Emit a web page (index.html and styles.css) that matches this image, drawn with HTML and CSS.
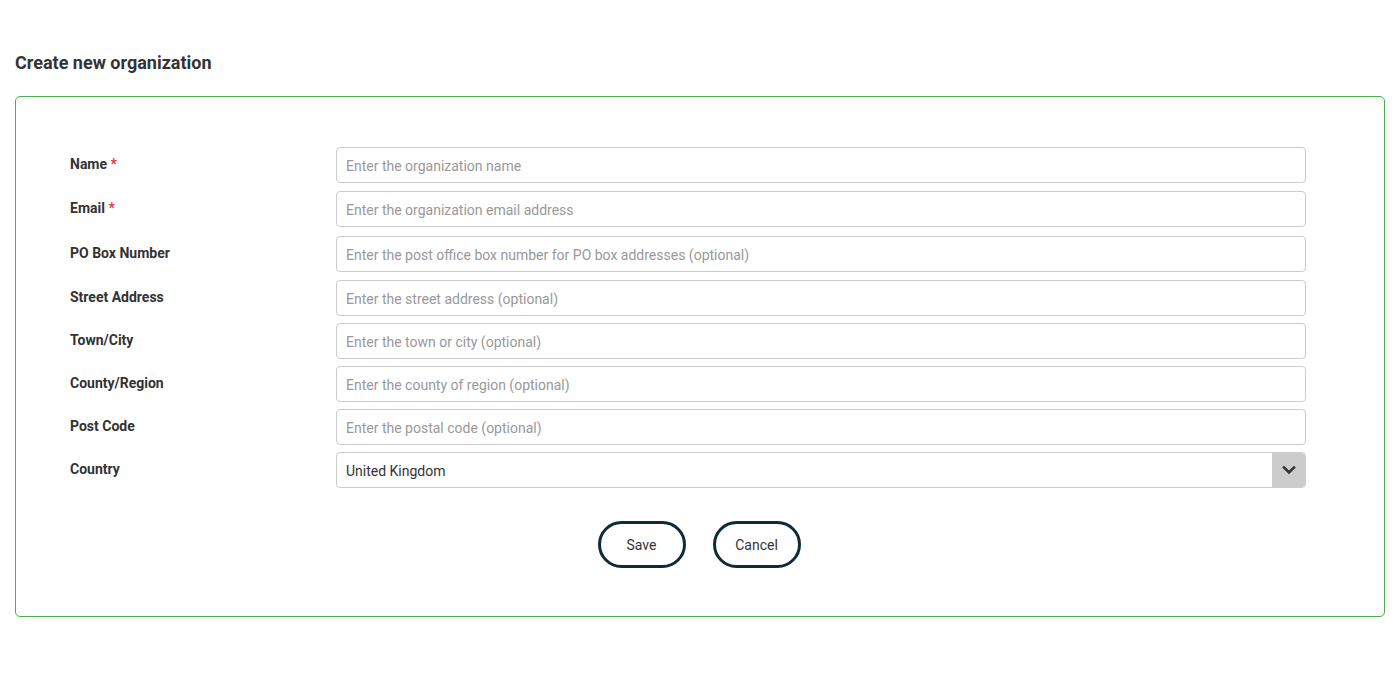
FILE: index.html
```html
<!DOCTYPE html>
<html>
<head>
<meta charset="utf-8">
<link rel="stylesheet" href="styles.css">
</head>
<body>
<div class="page">
  <h1 class="title">Create new organization</h1>
  <form class="card">
    <div class="row r1">
      <label class="label">Name <span class="req">*</span></label>
      <input class="field" type="text" placeholder="Enter the organization name">
    </div>
    <div class="row r2">
      <label class="label">Email <span class="req">*</span></label>
      <input class="field" type="text" placeholder="Enter the organization email address">
    </div>
    <div class="row r3">
      <label class="label">PO Box Number</label>
      <input class="field" type="text" placeholder="Enter the post office box number for PO box addresses (optional)">
    </div>
    <div class="row">
      <label class="label">Street Address</label>
      <input class="field" type="text" placeholder="Enter the street address (optional)">
    </div>
    <div class="row">
      <label class="label">Town/City</label>
      <input class="field" type="text" placeholder="Enter the town or city (optional)">
    </div>
    <div class="row">
      <label class="label">County/Region</label>
      <input class="field" type="text" placeholder="Enter the county of region (optional)">
    </div>
    <div class="row">
      <label class="label">Post Code</label>
      <input class="field" type="text" placeholder="Enter the postal code (optional)">
    </div>
    <div class="row">
      <label class="label">Country</label>
      <div class="select">
        <span class="select-value">United Kingdom</span>
        <span class="select-arrow">
          <svg width="14" height="10" viewBox="0 0 14 10"><path d="M2 2.5 L7 7.5 L12 2.5" fill="none" stroke="#333" stroke-width="2.6" stroke-linecap="square"/></svg>
        </span>
      </div>
    </div>
    <div class="actions">
      <button type="button" class="btn">Save</button>
      <button type="button" class="btn">Cancel</button>
    </div>
  </form>
</div>
</body>
</html>
```

FILE: styles.css
```css
* { box-sizing: border-box; }
html, body { margin: 0; padding: 0; background: #fff; }
body { font-family: Roboto, "Liberation Sans", Arial, sans-serif; color: #333; }
.page { padding: 52px 15px 0 15px; }
.title {
  margin: 0 0 22px 0;
  font-size: 18px;
  font-weight: 700;
  line-height: 22px;
  color: #333;
}
.card {
  border: 1px solid #4caf50;
  border-radius: 5px;
  width: 1370px;
  height: 521px;
  padding: 50px 78px 0 54px;
}
.row {
  display: flex;
  align-items: flex-start;
  margin-bottom: 7px;
}
.row.r1 { margin-bottom: 8px; }
.row.r2 { margin-bottom: 9px; }
.row.r3 { margin-bottom: 8px; }
.label {
  width: 266px;
  flex: none;
  font-size: 14px;
  font-weight: 700;
  line-height: 16px;
  padding-top: 9px;
  color: #333;
}
.req { color: #e53935; }
.field, .select {
  flex: 1;
  height: 36px;
  border: 1px solid #ccc;
  border-radius: 4px;
  padding: 1px 9px 0 9px;
  font-family: Roboto, "Liberation Sans", Arial, sans-serif;
  font-size: 14px;
  color: #333;
  background: #fff;
  outline: none;
}
.field::placeholder { color: #999; }
.select {
  display: flex;
  align-items: center;
  padding: 0 0 0 9px;
  overflow: hidden;
}
.select-value { flex: 1; padding-top: 1px; }
.select-arrow {
  width: 33px;
  height: 100%;
  background: #ccc;
  display: flex;
  align-items: center;
  justify-content: center;
}
.actions {
  display: flex;
  justify-content: center;
  gap: 27px;
  margin-top: 33px;
  padding-left: 22px;
}
.btn {
  width: 88px;
  height: 47px;
  padding-top: 2px;
  border: 3px solid #0f2a3b;
  border-radius: 24px;
  background: #fff;
  font-family: Roboto, "Liberation Sans", Arial, sans-serif;
  font-size: 14px;
  color: #333;
  cursor: pointer;
}
```
